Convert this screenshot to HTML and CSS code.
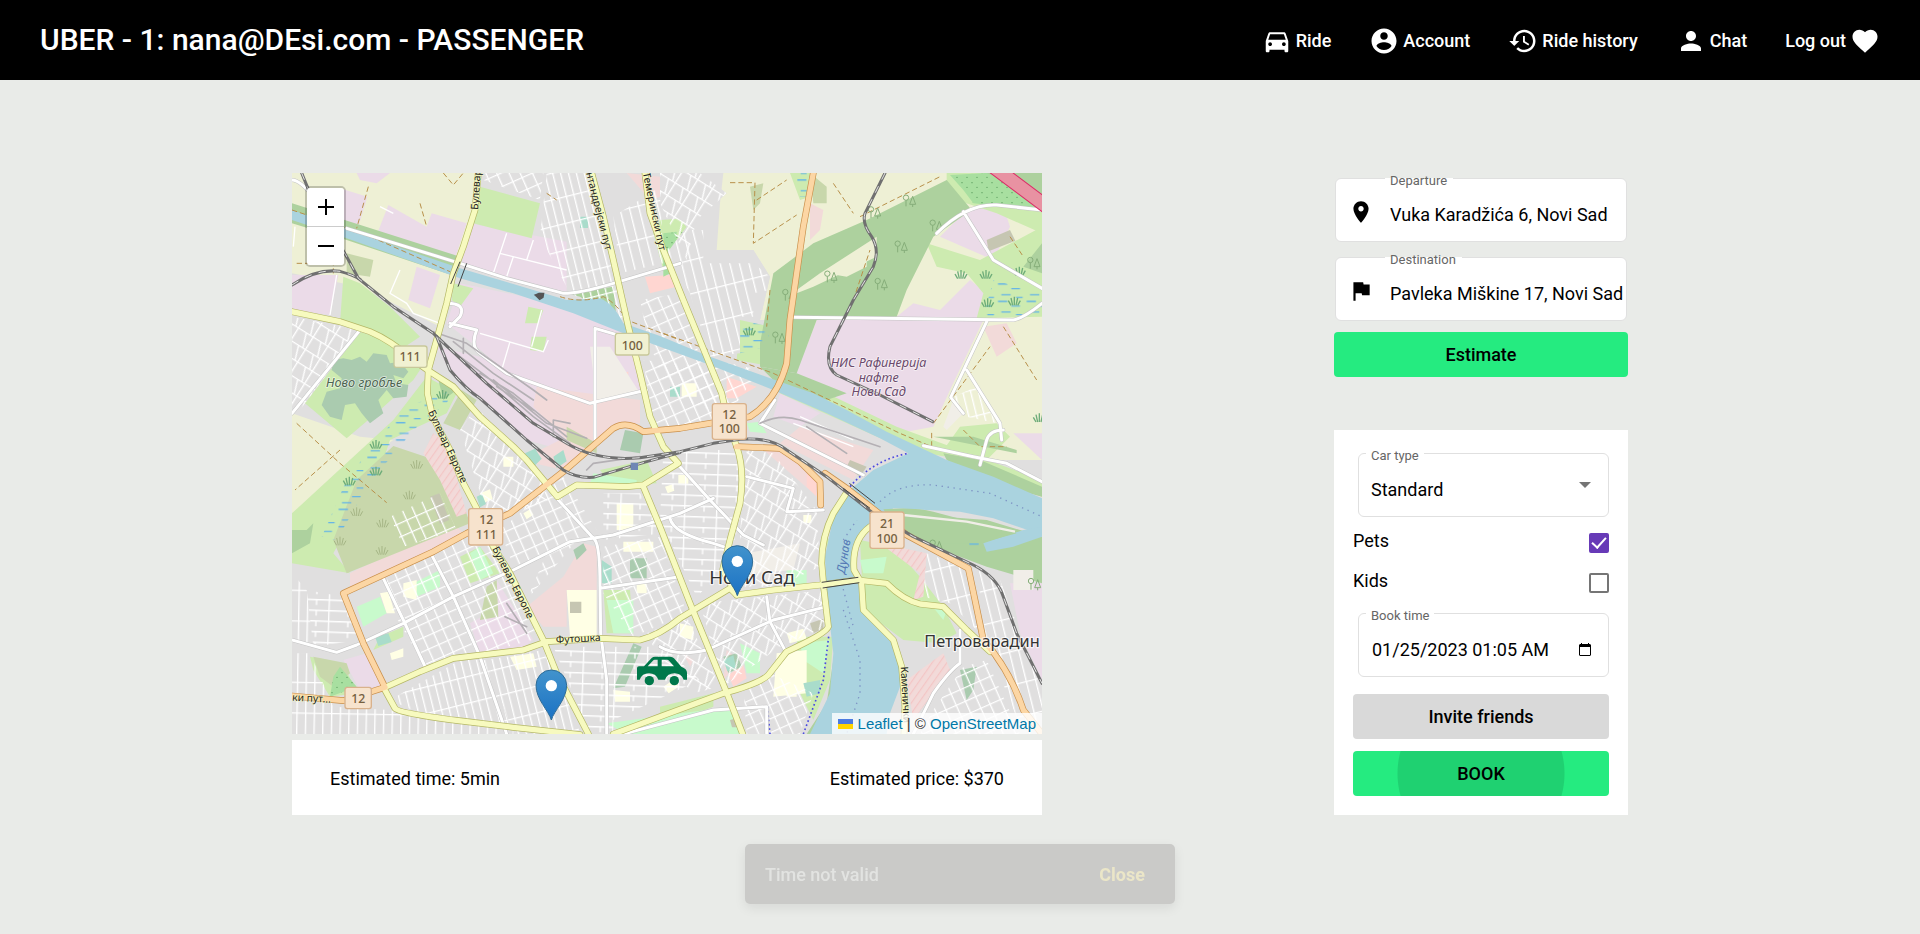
FILE: index.html
```html
<!DOCTYPE html>
<html lang="en">
<head>
<meta charset="utf-8">
<meta name="viewport" content="width=device-width, initial-scale=1">
<title>UBER</title>
<link rel="stylesheet" href="styles.css">
</head>
<body>
<header class="topbar">
  <h1 class="brand">UBER - 1: nana@DEsi.com - PASSENGER</h1>
  <nav class="nav">
    <a class="nav-link" href="#ride"><svg class="icon" viewBox="0 0 24 24"><path d="M18.92 6.01C18.72 5.42 18.16 5 17.5 5h-11c-.66 0-1.21.42-1.42 1.01L3 12v8c0 .55.45 1 1 1h1c.55 0 1-.45 1-1v-1h12v1c0 .55.45 1 1 1h1c.55 0 1-.45 1-1v-8l-2.08-5.99zM6.5 16c-.83 0-1.5-.67-1.5-1.5S5.67 13 6.5 13s1.5.67 1.5 1.5S7.33 16 6.5 16zm11 0c-.83 0-1.5-.67-1.5-1.5s.67-1.5 1.5-1.5 1.5.67 1.5 1.5-.67 1.5-1.5 1.5zM5 11l1.5-4.500h11L19 11H5z"/></svg><span>Ride</span></a>
    <a class="nav-link" href="#account"><svg class="icon" viewBox="0 0 24 24"><path d="M12 2C6.480 2 2 6.480 2 12s4.480 10 10 10 10-4.480 10-10S17.520 2 12 2zm0 3c1.660 0 3 1.340 3 3s-1.340 3-3 3-3-1.340-3-3 1.340-3 3-3zm0 14.200c-2.500 0-4.710-1.280-6-3.220.03-1.990 4-3.080 6-3.080 1.990 0 5.970 1.090 6 3.080-1.290 1.940-3.500 3.220-6 3.220z"/></svg><span>Account</span></a>
    <a class="nav-link" href="#history"><svg class="icon" viewBox="0 0 24 24"><path d="M13 3c-4.970 0-9 4.030-9 9H1l3.890 3.890.07.14L9 12H6c0-3.870 3.130-7 7-7s7 3.130 7 7-3.130 7-7 7c-1.930 0-3.680-.79-4.940-2.060l-1.420 1.420C8.270 19.990 10.510 21 13 21c4.970 0 9-4.030 9-9s-4.030-9-9-9zm-1 5v5l4.280 2.540.72-1.210-3.500-2.080V8H12z"/></svg><span>Ride history</span></a>
    <a class="nav-link" href="#chat"><svg class="icon" viewBox="0 0 24 24"><path d="M12 12c2.210 0 4-1.790 4-4s-1.790-4-4-4-4 1.790-4 4 1.790 4 4 4zm0 2c-2.670 0-8 1.340-8 4v2h16v-2c0-2.660-5.330-4-8-4z"/></svg><span>Chat</span></a>
    <a class="nav-link" href="#logout"><span>Log out</span><svg class="icon" viewBox="0 0 24 24"><path d="M12 21.350l-1.450-1.320C5.400 15.360 2 12.280 2 8.500 2 5.420 4.420 3 7.500 3c1.740 0 3.410.81 4.500 2.090C13.090 3.810 14.760 3 16.500 3 19.580 3 22 5.420 22 8.500c0 3.780-3.400 6.860-8.550 11.540L12 21.350z"/></svg></a>
  </nav>
</header>

<main class="page">
  <section class="ride">
    <div class="map">
      <svg class="map-canvas" viewBox="36 39 2250 1683" preserveAspectRatio="xMidYMid slice" role="img" aria-label="Map of Novi Sad">
        <defs>
          <pattern id="st-a" width="64" height="38" patternUnits="userSpaceOnUse" patternTransform="rotate(-24)"><path class="st" d="M0 2H64M2 0V38M36 2V38"/></pattern>
          <pattern id="st-b" width="46" height="78" patternUnits="userSpaceOnUse" patternTransform="rotate(-14)"><path class="st" d="M0 2H46M2 0V78M25 2V78"/></pattern>
          <pattern id="st-c" width="96" height="32" patternUnits="userSpaceOnUse" patternTransform="rotate(2)"><path class="st" d="M0 2H96M2 0V32M60 2V18"/></pattern>
          <pattern id="st-d" width="52" height="44" patternUnits="userSpaceOnUse" patternTransform="rotate(32)"><path class="st" d="M0 2H52M2 0V44M30 2L44 44"/></pattern>
          <pattern id="st-e" width="26" height="92" patternUnits="userSpaceOnUse" patternTransform="rotate(1)"><path class="st" d="M0 2H26M2 0V92"/></pattern>
          <pattern id="st-f" width="28" height="98" patternUnits="userSpaceOnUse" patternTransform="rotate(-14)"><path class="st" d="M0 2H28M2 0V98"/></pattern>
          <pattern id="orchard" width="30" height="30" patternUnits="userSpaceOnUse"><circle cx="6" cy="8" r="2" fill="#5a9c5c"/><circle cx="21" cy="22" r="2" fill="#5a9c5c"/></pattern>
          <pattern id="marsh" width="86" height="52" patternUnits="userSpaceOnUse"><path d="M4 8h28M44 22h26M14 40h28M58 48h20" stroke="#62b3e8" stroke-width="4"/></pattern>
          <pattern id="hatch" width="18" height="18" patternUnits="userSpaceOnUse" patternTransform="rotate(35)"><path d="M2 0V18" stroke="#f3b5b5" stroke-width="2"/></pattern>
          <linearGradient id="pinfill" x2="0" y2="1"><stop offset="0" stop-color="#4293cc"/><stop offset="1" stop-color="#1b72c4"/></linearGradient>
          <g id="yellow">
            <path d="M595 39L585 150L550 260L520 340L500 430L470 540L445 630L442 700L458 770L510 870L545 960L590 1045L640 1160L690 1240L740 1340L790 1440L830 1540L925 1722"/>
            <path d="M36 455L180 485L270 515Q330 540 400 600L450 635L520 680L600 770L700 860L740 900L832 1010L890 975L1040 980L1090 975L1195 910L1150 860L1110 770L1080 640L1045 500L1000 300L970 170L935 39"/>
            <path d="M1095 39L1110 160L1150 270L1210 420L1280 590L1325 700L1345 790L1370 860Q1395 930 1380 1030L1350 1140L1328 1230L1370 1305"/>
            <path d="M1090 980L1140 1100L1230 1330L1290 1475L1345 1610L1388 1722"/>
            <path d="M320 1580L420 1535L520 1495L730 1470L800 1445L960 1435L1080 1440Q1140 1425 1200 1375L1350 1285L1370 1305L1480 1290L1620 1275L1730 1260L1820 1270Q1870 1320 1920 1332L1990 1340L2060 1410L2130 1475"/>
            <path d="M1705 990L1660 1060Q1625 1130 1625 1210L1632 1290L1645 1400Q1640 1420 1520 1475L1465 1545Q1440 1570 1330 1600L1140 1670L1000 1722"/>
            <path d="M1770 1100Q1715 1140 1722 1230L1745 1270L1750 1350L1840 1440L1865 1520L1875 1640L1872 1722"/>
            <path d="M312 1585L345 1645Q355 1660 560 1685L700 1702L900 1724"/>
          </g>
          <g id="orange">
            <path d="M36 1608L190 1622L315 1582L250 1450L190 1300L460 1175L560 1120L690 1060L850 935L1000 805Q1040 780 1090 815L1200 805L1410 770Q1490 720 1520 610L1530 480L1570 200L1600 39"/>
            <path d="M1370 860L1500 865L1560 905L1620 965L1622 1035M1635 940L1700 985L1880 1125L2065 1225L2085 1320L2110 1440Q2190 1530 2230 1650L2286 1722"/>
          </g>
          <g id="white">
            <path d="M200 205L540 310L680 355L850 400Q900 400 1000 370L1200 310M510 490L590 510Q570 560 600 580L680 640L930 730L1100 690M945 505V840M945 505L1030 530M36 760L240 510M500 430Q560 430 540 470L510 500M36 60Q60 60 100 110"/>
            <path d="M1540 472L1800 475L2200 480Q2230 475 2286 430M2120 485L2012 712L2050 760M2286 150L2150 135Q2060 130 1970 220M2050 155L2140 300L2286 385M2060 630L2160 790L2165 840M2286 965L2180 910L2080 890L1930 857M2100 915L2120 840Q2130 810 2170 810"/>
            <path d="M36 1440L170 1477L230 1455L370 1390L520 1310L700 1230L870 1145L1000 1125L1200 1060L1300 1015M310 1255L370 1380L440 1530M455 1185L520 1310L600 1490L680 1722M835 1020L945 1140Q960 1160 960 1280L962 1420L980 1560V1722M960 1285L1200 1250"/>
            <path d="M1195 915L1290 1020L1390 1125L1450 1155M1170 1075Q1180 1120 1300 1150L1330 1160M1140 1460Q1190 1490 1280 1470L1480 1380L1640 1340M1460 1310L1470 1385L1520 1480M1400 950L1540 985L1520 1055L1630 1050M1030 1722L1300 1650L1460 1640V1722M1440 790L1750 945M1485 720L1440 790M1900 1722L1960 1600Q2010 1530 2040 1510L2040 1410"/>
          </g>
          <g id="rails">
            <path d="M65 39L90 100L200 290L235 355L340 440L460 520L620 670L760 790L860 850Q950 905 1080 893L1200 875L1300 850L1380 838Q1470 830 1520 870L1640 950L1780 1060L1900 1130L2080 1215Q2150 1250 2170 1310L2210 1420L2286 1570"/>
            <path d="M36 375Q110 325 180 334Q220 345 240 358M470 530L510 630Q560 690 600 715L740 840L850 930Q890 955 940 952L1100 905L1200 878"/>
            <path d="M1815 39L1755 160Q1745 190 1775 230Q1800 270 1780 320L1720 420L1650 560Q1635 620 1670 645L1800 705L1958 785"/>
          </g>
          <g id="tree"><circle cx="8" cy="8" r="8"/><path d="M8 16v18M28 4l-9 24h18zM28 28v8"/></g>
          <g id="reed"><path d="M0 12l8 14M8 4l5 22M18 0v26M28 4l-5 22M36 12l-8 14"/></g>
          <g id="pin"><path d="M0 0C-8-28-46-62-46-104a46 46 0 0 1 92 0C46-62 8-28 0 0z" fill="url(#pinfill)" stroke="#2e6c97" stroke-width="3"/><circle cy="-103" r="17" fill="#fff"/></g>
        </defs>

        <rect x="36" y="39" width="2250" height="1683" fill="#e0dfdf"/>

        <!-- farmland -->
        <g fill="#eef0d5">
          <path d="M36 39H600L580 190L520 350L480 500L240 380L36 340z"/>
          <path d="M36 760L240 830L340 840L36 1060z"/>
          <path d="M1330 39H2286V900H2020L1900 850L1500 480L1440 480L1470 350L1420 270H1310L1320 130z"/>
        </g>

        <!-- industrial -->
        <g fill="#ebdbe8">
          <path d="M230 39H330L290 70L240 60zM180 85L262 110L235 200L190 190zM325 135L440 200L455 160L560 190L520 310L290 225zM36 345L175 345L150 465L36 450zM410 320L480 345L450 445L385 420z"/>
          <path d="M570 190L860 245V395L700 360L545 310zM540 370L780 420L1040 510L1085 690L930 730L680 640L590 560L500 490z"/>
          <path d="M470 560L600 590L930 740L950 830L880 880L740 840L520 650z"/>
          <path d="M1610 480H2110L2010 690L1960 800L1800 830L1550 640zM1700 340L1810 330L1750 465L1640 460zM1980 230L2060 150L2170 140L2190 200L2140 300zM1850 470L1900 430L1980 450L2070 360L2120 400L2090 475z"/>
          <path d="M2200 820H2286V900zM190 1500L260 1480L310 1580L240 1590zM570 1390L640 1350L650 1260L760 1440L720 1470L600 1480zM2190 1270H2286V1560L2220 1420zM1500 700L1620 760L1560 800L1480 770z"/>
        </g>

        <!-- retail and commercial -->
        <g fill="#f2dad9">
          <path d="M215 400L250 380L245 480L205 475zM770 680L1080 720V790L1000 800L900 880L760 740zM210 1240L520 1090L560 1130L210 1290zM720 900L840 840L930 870L850 930zM740 1340L850 1250L910 1150L950 1160V1290H860V1400L790 1400z"/>
          <path d="M2110 500L2180 490L2210 550L2150 590zM1440 860L1530 880L1620 960L1600 1000zM1560 800L1780 870L1720 960L1500 850zM1040 39L1140 50V110L1110 120zM1590 130L1630 150L1620 210L1590 240zM1560 450L1600 440L1590 480zM1340 1470L1380 1500L1330 1560zM1210 1480L1240 1500L1230 1520z"/>
        </g>
        <g fill="#ffd6d1"><path d="M1095 350L1170 345L1190 380L1110 400zM1340 650L1430 680L1370 715H1340zM985 580L1010 590V640L1045 635V655L990 665zM1345 1545L1390 1515L1400 1555L1360 1580zM1580 930L1610 950V1010L1580 980zM1520 1180H1550L1530 1210z"/></g>

        <!-- grass -->
        <g fill="#cdebb0">
          <path d="M600 80L780 130L755 235L580 190zM520 370L580 385L540 440L515 420zM745 440L790 450L775 490L735 490zM755 530L800 530L790 575L750 570z"/>
          <path d="M240 515L360 555L440 600L400 660L300 750L200 835L75 730zM440 650L530 700L500 760L330 840L300 930L160 1180L210 1240L36 1210V1060L340 780z"/>
          <path d="M240 370L330 440L420 530L360 570L270 510L180 490L190 350zM1140 180L1220 175V300L1150 330L1120 220zM1380 480L1470 500L1480 620L1370 600zM1460 39H1600L1590 110L1560 120L1530 39z"/>
          <path d="M1940 250L2100 300L2286 200V470L2090 475L2110 400L2060 340L1970 320zM1500 650L1620 690L1850 800L2286 960V1010L2000 890L1880 870L1500 700zM2040 800L2150 790L2190 830L2120 900L1990 870zM2000 39H2286V220L2150 160L2000 110z"/>
          <path d="M90 1490L190 1510L230 1600L150 1610L100 1530zM1640 1130L1720 1230V1350L1640 1290zM1740 1140L1840 1160L1920 1250L1990 1340L2030 1420L1980 1450L1870 1440L1750 1350zM540 1190L600 1160L660 1240L570 1270zM1000 980L1130 970L1100 900L960 930zM300 1430L370 1400V1430L280 1470zM970 1290H1050L1060 1420H980zM1140 1640L1300 1600V1640L1140 1700zM1550 1430L1660 1430L1650 1560L1600 1680L1560 1600z"/>
        </g>

        <!-- scrub -->
        <g fill="#c8d7ab"><path d="M340 858L450 895L520 950L570 1090L200 1240L160 1140L230 960zM200 280L280 300L270 350L200 340zM545 690L590 720L540 810L490 790zM620 1280L650 1260L655 1370L600 1380zM100 1490L200 1510L210 1540L160 1580L120 1550zM860 800L950 850V880L860 840zM1410 80L1450 70L1440 130L1420 150zM1590 39L1640 80L1640 130L1600 130z"/></g>

        <!-- woods -->
        <g fill="#add19e">
          <path d="M36 130L540 290L530 350L200 240L36 190zM1440 550L1480 340L1600 250L1760 180L2000 60L2075 150L1960 230L1880 390L1850 470L1610 480L1550 640L1440 620z"/>
          <path d="M1440 620L1550 640L1700 700L1640 720L1500 680zM2286 250V340L2230 320zM2110 39H2286V120L2160 60zM1840 1060L1990 1070L2120 1080L2286 1130V1270L2120 1220L1880 1130zM36 1110L80 1110L100 1090L90 1150L36 1180zM1660 1500L1640 1630L1580 1722H1610L1670 1600zM860 400L1000 380L1010 480L900 410zM470 640L530 690L490 720z"/>
          <path d="M1990 880L2100 900L2286 980V1010L2100 960L2000 900zM1960 830H2080L2210 870V880z"/>
        </g>
        <path d="M1550 390L1620 340L1790 230L1790 290L1600 380L1550 400zM1640 340L1760 260V320L1700 350z" fill="#eef0d5"/>
        <g fill="#a8dfa0"><path d="M1150 220L1190 215V330L1150 350zM2010 45L2120 39L2280 110L2260 150L2080 130L2050 90zM180 1520L230 1580L150 1610L160 1550z"/></g>
        <path d="M1150 220L1220 215V330L1150 350zM2010 45L2120 39L2280 110L2260 150L2080 130L2050 90zM180 1520L230 1580L150 1610L160 1550z" fill="url(#orchard)"/>

        <!-- cemetery -->
        <g fill="#aacbaf">
          <path d="M215 600l25-10 20 15 20-25 40 5 10 25 30-5 25 30-15 20-30-10 10 25 35 5-5 35-40 5-20-25-25 30 15 40-40 30-25-30-20-30-30 5-10 45-35-10-25-35 15-40 40-10 5-30-30-25 5-30 30-5z"/>
          <path d="M1035 810L1090 820L1080 880L1020 870zM880 1170l30-20 10 20-30 30zM1050 1195h50v60h-50zM1060 1450l25 10-50 120-35 5zM2040 1530L2090 1520L2080 1590L2060 1620zM1330 1490l40-10 15 40-40 20z"/>
        </g>

        <!-- parks and schools -->
        <g fill="#c8facc"><path d="M570 1180L600 1160L640 1240L600 1260zM400 1270L480 1230V1280L410 1310zM230 1340L300 1310L320 1360L250 1400zM980 1320H1060V1420H1000zM1520 1230H1580V1280L1520 1290zM1560 1450L1650 1440L1630 1540L1570 1500zM980 1690L1350 1640L1380 1722H1040zM1380 1450L1440 1480V1540L1400 1540zM1950 1330L2000 1350L1990 1380zM1400 790L1440 785L1460 820L1410 815zM940 940L1070 960V975L930 970zM1740 1200L1820 1190L1810 1240L1750 1240z"/></g>
        <g fill="#ffffe5"><path d="M860 1290H950V1430H870zM1010 1030H1060V1110H1010zM1030 1145H1120V1175H1030zM690 1490L760 1480L770 1520L710 1530zM1490 1480L1580 1470V1600L1480 1610zM370 1270L410 1260V1320L370 1310zM300 1300L325 1295L345 1360H320zM330 1480L370 1465V1490L335 1500zM1200 1390L1240 1400V1440L1200 1430zM1205 670H1250V710H1205zM1070 1270h30v30h-30zM1195 945h30v26h-30zM1570 1065h24v24h-24zM1520 1420l50-14 10 30-50 14zM1520 1590l30-10v30h-30zM1000 1590l50 5v30h-45zM600 1000l30-12 8 30-30 12zM730 1060l20-12 10 16-20 14zM670 890h30v30h-30zM1155 980l24-8 4 20-20 8zM1150 1580l30-20 16 20-30 20z"/></g>
        <g fill="#a9dccb"><path d="M735 880l30-14 20 30-30 30zM820 890l30-20 10 34-30 20zM1170 680h30v30h-30zM900 170h24v34h-24zM285 1430l40-10 10 26-40 12zM965 1200l30 20v50h-30zM1330 1500l30-14 8 36-26 12zM1570 1570l50-10v40l-40 10zM590 1010l16-8 12 30-18 10z"/></g>
        <g fill="#c6c6b2"><path d="M450 1010l28-10 30 80-28 12zM870 1325h34v34h-34zM2120 240l70-30 16 32-80 32zM1710 900l50 20-20 30-40-30zM1590 1390l40-14v30l-30 14zM1350 1680l30-8v30h-24z"/></g>
        <g fill="#f1eee8"><path d="M1400 1180L1560 1150L1540 1230L1410 1240zM930 560H990L1080 700L950 720zM1990 800L2020 720L2050 760L2000 810zM2200 1230h60v60h-60z"/></g>
        <g fill="#f2dad9"><path d="M430 880L460 820L500 850L560 1060L530 1070L480 960zM1800 1150L1940 1180L1930 1310L1900 1320L1920 1240zM1880 1560L1990 1480L2010 1530L1900 1680z"/></g>
        <path d="M430 880L460 820L500 850L560 1060L530 1070L480 960zM1800 1150L1940 1180L1930 1310L1900 1320L1920 1240zM1880 1560L1990 1480L2010 1530L1900 1680z" fill="url(#hatch)"/>

        <!-- marshes -->
        <path d="M380 740L520 690L500 730L420 790L300 930L250 1000L170 1140L125 1130L200 960L290 840zM2140 360L2286 400V470L2110 470zM1380 480L1470 500L1460 560L1380 580zM2040 1140H2110V1160H2040zM1540 39H1580V110H1560z" fill="url(#marsh)"/>

        <!-- side streets -->
        <path d="M800 39H935L1045 490L870 400L780 230z" fill="url(#st-b)"/>
        <path d="M790 39L780 120L610 60V39zM1200 400L1260 590L1440 630L1340 770L1160 700L1100 520L1080 420z" fill="url(#st-a)"/>
        <path d="M1000 170L1140 80L1150 310L1020 340z" fill="url(#st-f)"/>
        <path d="M1140 39H1260L1340 100L1250 180L1260 270H1420L1470 350L1440 480L1380 480V580L1290 590L1160 280L1220 200L1140 120z" fill="#e0dfdf"/>
        <path d="M1220 210H1270V310H1420L1470 350V390L1420 400V470H1380V580L1290 590L1230 400L1160 270z" fill="url(#st-f)"/>
        <path d="M1140 39H1260L1340 100L1250 180L1220 300L1140 130z" fill="url(#st-d)"/>
        <path d="M36 470L240 510L60 750L36 740zM540 810L590 740L720 890L830 1010L700 1060L620 1060z" fill="url(#st-d)"/>
        <path d="M330 1070L480 1000L530 1110L370 1160zM320 1250L620 1100L790 1430L440 1530L330 1340zM660 1110L850 950L950 1110L700 1220zM800 1180L900 1130L740 1320z" fill="url(#st-a)"/>
        <path d="M36 1240L80 1290L100 1460L36 1440zM36 1480H90L160 1640L330 1650L700 1705V1722H36z" fill="url(#st-e)"/>
        <path d="M80 1290L190 1310L240 1440L100 1460zM1150 870L1380 870V1100L1320 1240L1250 1310L1140 1080zM970 1000L1080 1000L1150 1120L970 1140z" fill="url(#st-c)"/>
        <path d="M330 1620L540 1500L620 1500L690 1700L420 1660zM620 1500L790 1470L880 1640L900 1722H700z" fill="url(#st-b)"/>
        <path d="M820 1460H1000V1722H930zM1000 1460H1150L1260 1560L1000 1680z" fill="url(#st-c)"/>
        <path d="M1400 870L1480 880L1610 1050L1620 1220L1490 1280L1380 1280V1120zM1100 1420L1220 1370L1320 1580L1240 1600L1140 1500zM1260 1330L1640 1290V1400L1500 1460L1330 1580z" fill="url(#st-d)"/>
        <path d="M970 1160L1140 1130L1220 1360L1060 1430L970 1300zM1390 1580L1470 1540L1600 1600L1560 1722H1400zM1090 600L1280 620L1330 720V800H1120z" fill="url(#st-a)"/>
        <path d="M1940 1180L2070 1230L2100 1420L2010 1330L1930 1310zM2090 1230L2160 1260L2286 1590V1722H2230L2120 1450z" fill="url(#st-f)"/>
        <path d="M1960 1650L2050 1520L2120 1500L2220 1722H1920z" fill="url(#st-a)"/>
        <path d="M2020 710L2090 680L2150 790L2060 770z" fill="url(#st-b)"/>
        <path class="st" d="M680 220L640 340M700 290L680 350M660 280L860 330M760 240L740 300M785 450L755 560M690 545L665 630M600 520L790 575L805 540M360 330L330 400L380 430L400 460L480 490M170 345L150 465M45 200L40 260M300 140L340 160M1540 790L1720 860M1560 770L1720 840"/>

        <!-- water -->
        <g fill="#aad3df">
          <path d="M36 150L200 208L540 325L700 372L860 420L960 415Q1000 430 1030 490L1140 528L1290 590L1500 665L1600 700L1700 750L1820 815L2000 900L2140 950L2286 1015V1125L2140 1075L2040 1055L1840 1045L1760 1100L1725 1170L1735 1270L1750 1360L1840 1450L1865 1520L1860 1580L1830 1660L1820 1722H1590L1650 1600L1660 1480L1640 1310L1635 1190L1660 1070L1710 990L1780 930L1885 880L1800 835L1640 760L1480 690L1290 615L1140 560L1030 520L880 460L700 400L540 355L200 235L36 180z"/>
          <path d="M2110 1150L2230 1110L2286 1100V1130L2200 1160L2120 1175z"/>
        </g>
        <path d="M1810 1048Q1900 1040 1960 1055L2090 1090L2210 1120L2100 1150L1980 1150L1850 1110z" fill="#add19e"/>
        <path d="M1870 1065L2060 1085L2205 1115" fill="none" stroke="#f1eee8" stroke-width="7"/>
        <path class="ferry" d="M1690 1350L1740 1500L1740 1600L1700 1722M1690 1140L1730 1080M1800 1025Q1850 970 1960 975L2130 1000L2286 1070M1685 1270L1720 1400"/>
        <path class="quay" d="M1710 980Q1780 900 1885 880M1646 1430L1630 1560L1570 1722M1462 1640L1470 1722"/>

        <!-- tracks -->
        <path class="track" d="M265 80L230 205M36 150L260 225L510 335M420 130L440 200M490 39L520 75L550 39M50 310H160V340M800 100L830 120M840 410Q900 430 970 410Q1010 430 1040 480L1200 540M50 790L180 910L320 1028M180 870L45 990M1350 68H1425L1420 250L1550 165M1430 120L1520 60M1660 70L1720 160M1740 170L1980 50M1470 390L1460 500M1150 520L1480 640L1860 820L1955 860V810M1960 790L2130 560M2170 500L2270 660M2190 230L2230 290M1720 420L1770 270M2050 810L2100 860H2180"/>

        <g class="glyph-tree"><use href="#tree" x="1870" y="105"/><use href="#tree" x="1950" y="180"/><use href="#tree" x="1845" y="243"/><use href="#tree" x="1508" y="388"/><use href="#tree" x="1478" y="516"/><use href="#tree" x="1785" y="355"/><use href="#tree" x="2243" y="292"/><use href="#tree" x="1950" y="1140"/><use href="#tree" x="2245" y="1255"/><use href="#tree" x="1634" y="333"/><use href="#tree" x="1765" y="140"/></g>
        <g class="glyph-reed"><use href="#reed" x="270" y="840"/><use href="#reed" x="270" y="920"/><use href="#reed" x="190" y="950"/><use href="#reed" x="470" y="690"/><use href="#reed" x="2100" y="330"/><use href="#reed" x="2200" y="320"/><use href="#reed" x="2105" y="415"/><use href="#reed" x="2185" y="410"/><use href="#reed" x="1390" y="500"/><use href="#reed" x="2025" y="330"/><use href="#reed" x="2260" y="760"/></g>
        <g class="glyph-scrub"><use href="#reed" x="392" y="900"/><use href="#reed" x="370" y="992"/><use href="#reed" x="212" y="1042"/><use href="#reed" x="290" y="1076"/><use href="#reed" x="162" y="1130"/><use href="#reed" x="288" y="1158"/></g>

        <use class="road white-case" href="#white"/>
        <use class="road white-fill" href="#white"/>
        <path class="road yard" d="M460 515L560 550L760 690L800 720M500 560L620 650L760 770L870 850M520 545L640 640L760 720M600 640L700 700L860 830M640 660L800 790L920 835M650 680L760 750M550 535V580M820 830V780L870 790M920 930L940 910L1080 890M1440 790Q1500 760 1560 780L1800 860M1580 800L1700 880M680 1330L740 1420M675 1370L740 1400"/>
        <use class="road yellow-case" href="#yellow"/>
        <use class="road orange-case" href="#orange"/>
        <use class="road yellow-fill" href="#yellow"/>
        <use class="road orange-fill" href="#orange"/>
        <path class="road motorway-case" d="M2140 20L2300 140"/>
        <path class="road motorway" d="M2140 20L2300 140"/>
        <use class="road rail" href="#rails"/>
        <use class="road rail-dash" href="#rails"/>
        <path class="bridge" d="M1625 1267L1735 1252M1628 1284L1738 1268M1690 985L1770 1045M1708 970L1785 1030M540 305L512 372M560 310L534 380"/>
        <rect x="1052" y="908" width="22" height="22" fill="#6f87b5"/>
        <path d="M765 405l12-5 14 0-2 12-10 6-8-8z" fill="#555" stroke="#555" stroke-width="4"/>

        <!-- road shields -->
        <g class="shield-yellow"><rect x="342" y="558" width="99" height="64" rx="7"/><rect x="1006" y="520" width="101" height="65" rx="7"/></g>
        <g class="shield-orange"><rect x="1297" y="731" width="102" height="107" rx="7"/><rect x="566" y="1046" width="102" height="109" rx="7"/><rect x="1770" y="1056" width="102" height="109" rx="7"/><rect x="195" y="1582" width="79" height="64" rx="7"/></g>
        <g class="shield-text">
          <text x="390" y="602">111</text><text x="1057" y="570">100</text>
          <text x="1348" y="776">12</text><text x="1348" y="820">100</text>
          <text x="619" y="1093">12</text><text x="619" y="1137">111</text>
          <text x="1821" y="1104">21</text><text x="1821" y="1149">100</text>
          <text x="235" y="1629">12</text>
        </g>

        <!-- place names -->
        <text class="area cemetery" x="252" y="682">Ново гробље</text>
        <g class="area works"><text x="1796" y="620">НИС Рафинерија</text><text x="1796" y="665">нафте</text><text x="1796" y="709">Нови Сад</text></g>
        <text class="river" transform="translate(1694 1242) rotate(-80)">Дунав</text>
        <g class="street">
          <text transform="translate(594 150) rotate(-86)">Булевар</text>
          <text transform="translate(918 39) rotate(76)">нтандрејски пут</text>
          <text transform="translate(1088 39) rotate(78)">Темерински пут</text>
          <text transform="translate(444 756) rotate(65)">Булевар Европе</text>
          <text transform="translate(636 1166) rotate(63)">Булевар Европе</text>
          <text transform="translate(828 1450) rotate(-3)">Футошка</text>
          <text transform="translate(36 1622) rotate(3)">ки пут...</text>
          <text transform="translate(1862 1520) rotate(87)">Каменички</text>
        </g>
        <text class="place" x="1416" y="1272" font-size="56">Нови Сад</text>
        <text class="place" x="2106" y="1460" font-size="49">Петроварадин</text>

        <!-- taxi -->
        <g fill="#00784a">
          <path fill-rule="evenodd" d="M1071 1524q0-5 6-5h15l23-25q4-4 10-4h45q8 0 12 5l22 25q17 6 17 18v21h-10a30 30 0 0 0-56 0h-20a30 30 0 0 0-56 0h-8zM1103 1519h30v-20h-9q-3 0-6 4zM1145 1499v20h37l-15-17q-2-3-6-3z"/>
          <circle cx="1108" cy="1562" r="14"/><circle cx="1183" cy="1562" r="14"/>
        </g>
        <use href="#pin" x="814" y="1680"/>
        <use href="#pin" x="1372" y="1307"/>
      </svg>
      <div class="zoom">
        <button class="zoom-btn" type="button" aria-label="Zoom in"><svg viewBox="0 0 16 16"><path d="M0 8H16M8 0V16"/></svg></button>
        <button class="zoom-btn" type="button" aria-label="Zoom out"><svg viewBox="0 0 16 16"><path d="M0 8H16"/></svg></button>
      </div>
      <div class="attribution"><a href="#leaflet"><svg class="flag" viewBox="0 0 15 10"><path fill="#4c7be1" d="M0 0h15v5H0z"/><path fill="#ffd500" d="M0 5h15v5H0z"/></svg> Leaflet</a> | © <a href="#osm">OpenStreetMap</a></div>
    </div>
    <div class="estimate">
      <span>Estimated time: 5min</span>
      <span>Estimated price: $370</span>
    </div>
  </section>

  <aside class="side">
    <form class="route">
      <div class="field filled">
        <label for="departure">Departure</label>
        <svg class="field-icon" viewBox="0 0 24 24"><path d="M12 2C8.130 2 5 5.130 5 9c0 5.250 7 13 7 13s7-7.750 7-13c0-3.870-3.130-7-7-7zm0 9.500c-1.380 0-2.500-1.120-2.500-2.500s1.120-2.500 2.500-2.500 2.500 1.120 2.500 2.500-1.120 2.500-2.500 2.500z"/></svg>
        <input id="departure" type="text" value="Vuka Karadžića 6, Novi Sad">
      </div>
      <div class="field filled">
        <label for="destination">Destination</label>
        <svg class="field-icon" viewBox="0 0 24 24"><path d="M14.400 6L14 4H5v17h2v-7h5.600l.4 2h7V6z"/></svg>
        <input id="destination" type="text" value="Pavleka Miškine 17, Novi Sad">
      </div>
      <button class="btn primary" type="button">Estimate</button>
    </form>

    <form class="booking">
      <div class="field outlined">
        <label for="car">Car type</label>
        <select id="car"><option>Standard</option></select>
        <svg class="caret" viewBox="0 0 12 6"><path d="M0 0h12L6 6z"/></svg>
      </div>
      <div class="check"><label for="pets">Pets</label><input id="pets" type="checkbox" checked></div>
      <div class="check"><label for="kids">Kids</label><input id="kids" type="checkbox"></div>
      <div class="field outlined">
        <label for="time">Book time</label>
        <input id="time" type="text" value="01/25/2023 01:05 AM">
        <button class="picker" type="button" aria-label="Show date picker"><svg viewBox="0 0 12 13"><path fill-rule="evenodd" d="M2 0h1v1h6V0h1v1h1l1 1v10l-1 1H1l-1-1V2l1-1h1zM1 4v8h10V4z"/></svg></button>
      </div>
      <button class="btn secondary" type="button">Invite friends</button>
      <button class="btn pressed" type="button">BOOK</button>
    </form>
  </aside>
</main>

<div class="snackbar" role="status">
  <span>Time not valid</span>
  <button type="button">Close</button>
</div>
</body>
</html>
```

FILE: styles.css
```css
* { box-sizing: border-box; }

body {
  margin: 0;
  min-height: 100vh;
  background: #e9ebe8;
  color: #000;
  font: 400 18px/24px Roboto, sans-serif;
}

button, input, select { font: inherit; color: inherit; }
button { cursor: pointer; }

/* Header */
.topbar {
  display: flex;
  align-items: center;
  justify-content: space-between;
  height: 80px;
  padding: 0 40px;
  background: #000;
  color: #fff;
}
.brand { margin: 0; font-size: 30px; line-height: 40px; font-weight: 500; }
.nav { display: flex; gap: 38px; padding-top: 2px; }
.nav-link { display: flex; align-items: center; gap: 4px; color: inherit; font-weight: 500; text-decoration: none; }
.icon { width: 30px; height: 30px; fill: currentColor; }

/* Layout */
.page { display: flex; justify-content: space-evenly; align-items: flex-start; padding-top: 93px; }
.ride { width: 750px; display: grid; gap: 6px; }
.side { width: 294px; padding-top: 5px; }

/* Map */
.map { position: relative; overflow: hidden; }
.map-canvas { display: block; width: 100%; height: auto; }
.zoom {
  position: absolute;
  top: 13px;
  left: 13px;
  border: 2px solid rgba(0, 0, 0, 0.2);
  border-radius: 5px;
  background-clip: padding-box;
}
.zoom-btn {
  display: grid;
  place-items: center;
  width: 37px;
  height: 38px;
  padding: 0;
  border: 0;
  background: #fff;
  border-radius: 0 0 3px 3px;
}
.zoom-btn:first-child { height: 39px; border-bottom: 1px solid #ccc; border-radius: 3px 3px 0 0; }
.zoom-btn svg { width: 16px; height: 16px; stroke: #000; stroke-width: 2; }
.attribution {
  position: absolute;
  right: 0;
  bottom: 0;
  padding: 0 6px;
  background: rgba(255, 255, 255, 0.8);
  color: #333;
  font: 15px/21px "Liberation Sans", Arial, sans-serif;
}
.attribution a { color: #0078a8; text-decoration: none; }
.flag { width: 15px; height: 10px; }

.st { fill: none; stroke: #fff; stroke-width: 4; }
.road { fill: none; stroke-linejoin: round; stroke-linecap: round; }
.white-case { stroke: #c4c4c4; stroke-width: 12; }
.white-fill { stroke: #fff; stroke-width: 9; }
.yellow-case { stroke: #b4b765; stroke-width: 20; }
.yellow-fill { stroke: #f7fabf; stroke-width: 16; }
.orange-case { stroke: #c98f4a; stroke-width: 20; }
.orange-fill { stroke: #fcd6a4; stroke-width: 16; }
.motorway-case { stroke: #dc2a67; stroke-width: 44; }
.motorway { stroke: #e892a2; stroke-width: 38; }
.yard { stroke: #b4b0b4; stroke-width: 5; }
.rail { stroke: #707070; stroke-width: 9; }
.rail-dash { stroke: #e4e4e4; stroke-width: 3; stroke-dasharray: 22 22; stroke-linecap: butt; }
.bridge { fill: none; stroke: #444; stroke-width: 3; }
.track { fill: none; stroke: #b8904a; stroke-width: 3; stroke-dasharray: 16 9; }
.ferry { fill: none; stroke: #7d93c4; stroke-width: 4; stroke-dasharray: 4 14; }
.quay { fill: none; stroke: #4a4ae0; stroke-width: 5; stroke-dasharray: 5 8; }
.glyph-tree { fill: none; stroke: #86ae7a; stroke-width: 3; }
.glyph-reed { fill: none; stroke: #6dac79; stroke-width: 4; }
.glyph-scrub { fill: none; stroke: #a5b585; stroke-width: 3; }
.shield-yellow { fill: #f1f1d2; stroke: #c8c89a; stroke-width: 4; }
.shield-orange { fill: #f7e3cd; stroke: #d9b28c; stroke-width: 4; }
.shield-text, .area, .river, .street, .place { font-family: "Noto Sans", sans-serif; paint-order: stroke; stroke-linejoin: round; }
.shield-text { fill: #75603f; font-size: 37px; font-weight: 500; text-anchor: middle; }
.area { font-size: 38px; font-style: italic; text-anchor: middle; stroke: rgba(255, 255, 255, 0.6); stroke-width: 5; }
.cemetery { fill: #4e6552; }
.works { fill: #6b4a6c; }
.river { fill: #5479b5; font-size: 36px; font-style: italic; }
.street { fill: #222; font-size: 31px; stroke: rgba(247, 250, 191, 0.7); stroke-width: 4; }
.place { fill: #333; text-anchor: middle; stroke: rgba(255, 255, 255, 0.7); stroke-width: 7; }

.estimate {
  display: flex;
  align-items: center;
  justify-content: space-between;
  min-height: 75px;
  padding: 2px 38px 0;
  background: #fff;
}

/* Form fields */
.field {
  position: relative;
  display: flex;
  align-items: center;
  height: 64px;
  border: 1px solid #e0e0e0;
  border-radius: 6px;
  background: #fff;
}
.field label {
  position: absolute;
  top: -5px;
  padding: 0 5px;
  background: #fff;
  color: #666;
  font-size: 13px;
  line-height: 14px;
}
.field input, .field select { flex: 1; min-width: 0; height: 40px; margin-top: 9px; border: 0; background: transparent; outline: 0; }
.filled { margin: 0 1px 15px; }
.filled label { left: 49px; padding-right: 6px; background: linear-gradient(transparent 4px, #fff 4px); }
.field-icon { width: 26px; height: 26px; margin: 4px 16px 0 12px; fill: #000; }
.filled input { padding: 0 2px 0 0; }

.btn {
  width: 100%;
  height: 45px;
  padding: 0;
  border: 0;
  border-radius: 4px;
  font-weight: 500;
}
.primary { background: #25eb80; }
.secondary { margin-bottom: 14px; background: #d9d9d9; }
.pressed { background: radial-gradient(circle at center, #1fd171 83px, #25eb80 84px); }
.route .btn { display: block; margin-top: -4px; }

.booking {
  display: flex;
  flex-direction: column;
  margin-top: 53px;
  padding: 23px 19px 19px;
  background: #fff;
}
.booking .secondary { margin-bottom: 12px; }
.outlined { margin-left: 5px; }
.outlined label { left: 7px; }
.outlined select { padding: 0 12px; appearance: none; }
.outlined input { padding: 0 0 0 13px; }
.caret { position: absolute; right: 17px; width: 12px; height: 6px; fill: #757575; pointer-events: none; }
.picker { display: flex; margin: 8px 17px 0 0; padding: 0; border: 0; background: none; }
.picker svg { width: 12px; height: 13px; }
.check { display: flex; justify-content: space-between; align-items: center; height: 40px; }
.outlined + .check { margin-top: 6px; }
.check + .outlined { margin-top: 10px; margin-bottom: 17px; }
.check label { padding-bottom: 4px; }
.check input {
  appearance: none;
  width: 20px;
  height: 20px;
  margin: 0;
  border: 2px solid #757575;
  border-radius: 2px;
  background: #fff;
}
.check input:checked { display: grid; place-items: center; border-color: #673ab7; background: #673ab7; }
.check input:checked::after {
  content: "";
  width: 6px;
  height: 12px;
  margin-top: -4px;
  border: solid #fff;
  border-width: 0 2px 2px 0;
  transform: rotate(42deg);
}

/* Snackbar */
.snackbar {
  position: fixed;
  left: 50%;
  bottom: 30px;
  display: flex;
  align-items: center;
  justify-content: space-between;
  width: 430px;
  height: 60px;
  padding: 2px 20px 0;
  border-radius: 5px;
  background: #cacac8;
  color: #e2e3e1;
  font-weight: 500;
  box-shadow: 0 4px 12px rgba(0, 0, 0, 0.08);
  transform: translateX(-50%);
}
.snackbar button { padding: 0 10px; border: 0; background: none; color: #ebe6c8; font-weight: 700; }
```
